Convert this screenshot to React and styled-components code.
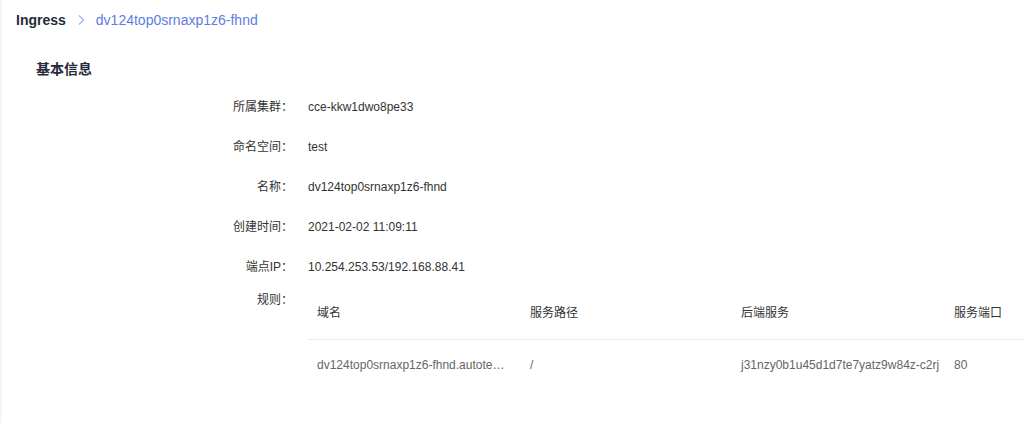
import React from 'react'
import styled, { createGlobalStyle } from 'styled-components'

const GlobalStyle = createGlobalStyle`
  html, body {
    margin: 0;
    padding: 0;
    background: #fff;
    overflow: hidden;
  }
  body {
    font-family: 'Liberation Sans', Arial, 'Noto Sans CJK SC', sans-serif;
    color: #333;
  }
`

const Page = styled.div`
  width: 1024px;
  height: 423px;
  box-sizing: border-box;
  border-left: 2px solid #f6f6f6;
  overflow: hidden;
`

const Breadcrumb = styled.div`
  display: flex;
  align-items: center;
  padding: 10px 14px 0;
  height: 20px;
  font-size: 14px;
  line-height: 20px;

  .root {
    font-weight: 700;
    color: #252b3a;
  }

  .sep {
    display: flex;
    align-items: center;
    margin: 0 11px 0 12px;
  }

  .current {
    color: #5e7ce0;
  }
`

const SectionTitle = styled.h3`
  margin: 29px 0 0 34px;
  font-size: 14px;
  line-height: 20px;
  font-weight: 700;
  color: #252b3a;
`

const InfoList = styled.div`
  margin-top: 8px;
  display: grid;
  grid-template-columns: 291px 1fr;
  column-gap: 15px;
  font-size: 12px;
  line-height: 20px;
`

const Label = styled.div`
  text-align: right;
  color: #333;
  padding: ${p => (p.top ? '3px 0 0' : '10px 0')};
  white-space: nowrap;
`

const Value = styled.div`
  color: #333;
  padding: 10px 0;
  white-space: nowrap;
`

const Table = styled.div`
  margin-top: 3px;
  display: grid;
  grid-template-columns: 213px 211px 213px 212px;
  width: 849px;
`

const HeadCell = styled.div`
  padding: 13px 9px 16px;
  border-bottom: 1px solid #e8e8ee;
  color: #333;
  white-space: nowrap;
`

const Cell = styled.div`
  padding: 15px 9px;
  color: #666;
  white-space: nowrap;
  overflow: hidden;
  text-overflow: ${p => (p.clip ? 'clip' : 'ellipsis')};
  padding-right: ${p => (p.tight ? '2px' : '14px')};
`

const info = [
  ['所属集群：', 'cce-kkw1dwo8pe33'],
  ['命名空间：', 'test'],
  ['名称：', 'dv124top0srnaxp1z6-fhnd'],
  ['创建时间：', '2021-02-02 11:09:11'],
  ['端点IP：', '10.254.253.53/192.168.88.41'],
]

const columns = ['域名', '服务路径', '后端服务', '服务端口']

const rows = [
  ['dv124top0srnaxp1z6-fhnd.autotest.example.com', '/', 'j31nzy0b1u45d1d7te7yatz9w84z-c2rj', '80'],
]

export default function App() {
  return (
    <>
      <GlobalStyle />
      <Page>
        <Breadcrumb>
          <span className="root">Ingress</span>
          <span className="sep">
            <svg width="7" height="12" viewBox="0 0 7 12" fill="none">
              <path d="M1 1.5L5.5 6 1 10.5" stroke="#9fb4ee" strokeWidth="1.2" />
            </svg>
          </span>
          <span className="current">dv124top0srnaxp1z6-fhnd</span>
        </Breadcrumb>
        <SectionTitle>基本信息</SectionTitle>
        <InfoList>
          {info.map(([k, v]) => (
            <React.Fragment key={k}>
              <Label>{k}</Label>
              <Value>{v}</Value>
            </React.Fragment>
          ))}
          <Label top>规则：</Label>
          <Table>
            {columns.map(c => (
              <HeadCell key={c}>{c}</HeadCell>
            ))}
            {rows.map(r =>
              r.map((c, i) => (
                <Cell key={i} clip={i === 2} tight={i === 2}>
                  {c}
                </Cell>
              ))
            )}
          </Table>
        </InfoList>
      </Page>
    </>
  )
}
